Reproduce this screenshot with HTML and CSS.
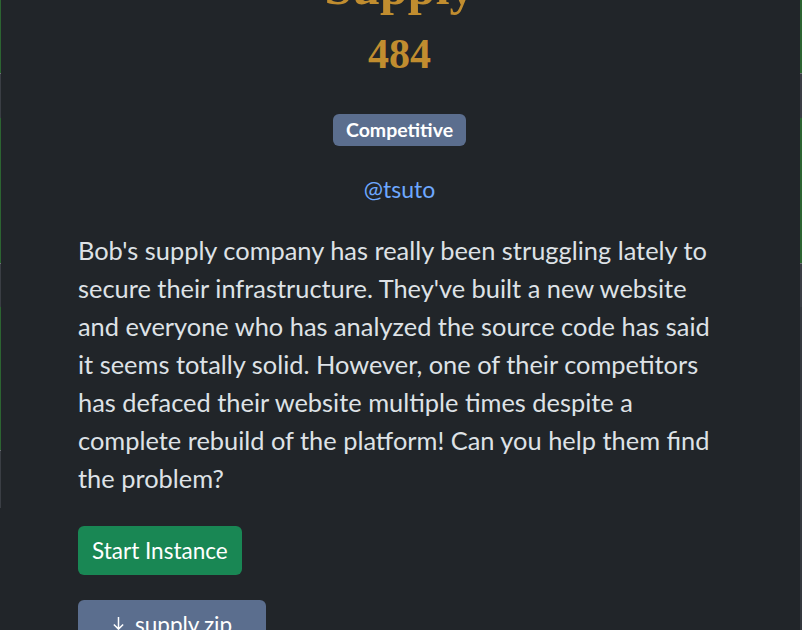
FILE: index.html
```html
<!DOCTYPE html>
<html>
<head>
    <title>Supply</title>
    <link rel="stylesheet" href="styles.css">
</head>
<body>
    <div class="page">
        <!-- challenge cards peeking out from behind the dialog -->
        <div class="edge edge-left">
            <span class="seg solved" style="height: 73px"></span>
            <span class="seg gap" style="height: 44px"></span>
            <span class="seg solved" style="height: 145px"></span>
            <span class="seg gap" style="height: 43px"></span>
            <span class="seg solved" style="height: 143px"></span>
            <span class="seg gap" style="height: 57px"></span>
        </div>

        <div class="challenge-modal">
            <h2 class="challenge-name">Supply</h2>
            <h3 class="challenge-value">484</h3>

            <div class="tags">
                <span class="badge">Competitive</span>
            </div>

            <div class="author">
                <a href="#">@tsuto</a>
            </div>

            <div class="description">
                <p>Bob's supply company has really been struggling lately to secure their infrastructure. They've built a new website and everyone who has analyzed the source code has said it seems totally solid. However, one of their competitors has defaced their website multiple times despite a complete rebuild of the platform! Can you help them find the problem?</p>
            </div>

            <div class="actions">
                <button class="btn btn-start">Start Instance</button>
                <a class="btn btn-file" href="#">
                    <svg class="icon" viewBox="0 0 14 18" width="13" height="17">
                        <path d="M7 1v13M2 9l5 5 5-5M1 17h12" fill="none" stroke="currentColor" stroke-width="1.6"/>
                    </svg>
                    supply.zip
                </a>
            </div>
        </div>

        <div class="edge edge-right">
            <span class="seg solved" style="height: 73px"></span>
            <span class="seg gap" style="height: 44px"></span>
            <span class="seg solved" style="height: 145px"></span>
            <span class="seg gap" style="height: 43px"></span>
            <span class="seg open" style="height: 325px"></span>
        </div>
    </div>
</body>
</html>
```

FILE: styles.css
```css
html, body { margin: 0; height: 100%; }
body { background: #212529; color: #dee2e6; font-family: Lato, "Noto Sans", sans-serif; overflow: hidden; }

.page { display: flex; height: 630px; }

.edge { display: flex; flex-direction: column; flex: none; }
.edge-left { width: 1px; }
.edge-right { width: 2px; }
.seg { display: block; flex: none; }
.seg.solved { background: #2c6431; }
.seg.gap { background: #3a3e44; border-top: 1px solid #6c7075; }
.seg.open { background: #34383d; }

.challenge-modal { flex: 1; background: #212529; padding: 0 79px 0 77px; text-align: center; }

.challenge-name { font-family: "Liberation Serif", serif; font-weight: bold; font-size: 50px; line-height: 60px; color: #c18d2f; margin: -43px 0 0; }
.challenge-value { font-family: "Liberation Serif", serif; font-weight: bold; font-size: 42px; line-height: 50px; color: #c18d2f; margin: 12px 0 0; }

.tags { display: flex; justify-content: center; margin-top: 35px; }
.badge { background: #5b6e8e; color: #fff; font-weight: bold; font-size: 19.5px; line-height: 32px; padding: 0 13px; border-radius: 6px; }

.author { margin-top: 28px; font-size: 23px; line-height: 30px; }
.author a { color: #6ea8fe; text-decoration: none; }

.description { text-align: left; margin-top: 27px; font-size: 25.4px; line-height: 38px; }
.description p { margin: 0; }

.actions { display: flex; flex-direction: column; align-items: flex-start; gap: 25px; margin-top: 29px; }
.btn { display: inline-flex; align-items: center; gap: 10px; font-family: Lato, sans-serif; font-size: 22.5px; line-height: 33px; padding: 8px 14px; color: #fff; border: none; border-radius: 6px; text-decoration: none; cursor: pointer; }
.btn-start { background: #198754; }
.btn-file { background: #5b6e8e; padding: 8px 34px; }
.icon { flex: none; }
```
